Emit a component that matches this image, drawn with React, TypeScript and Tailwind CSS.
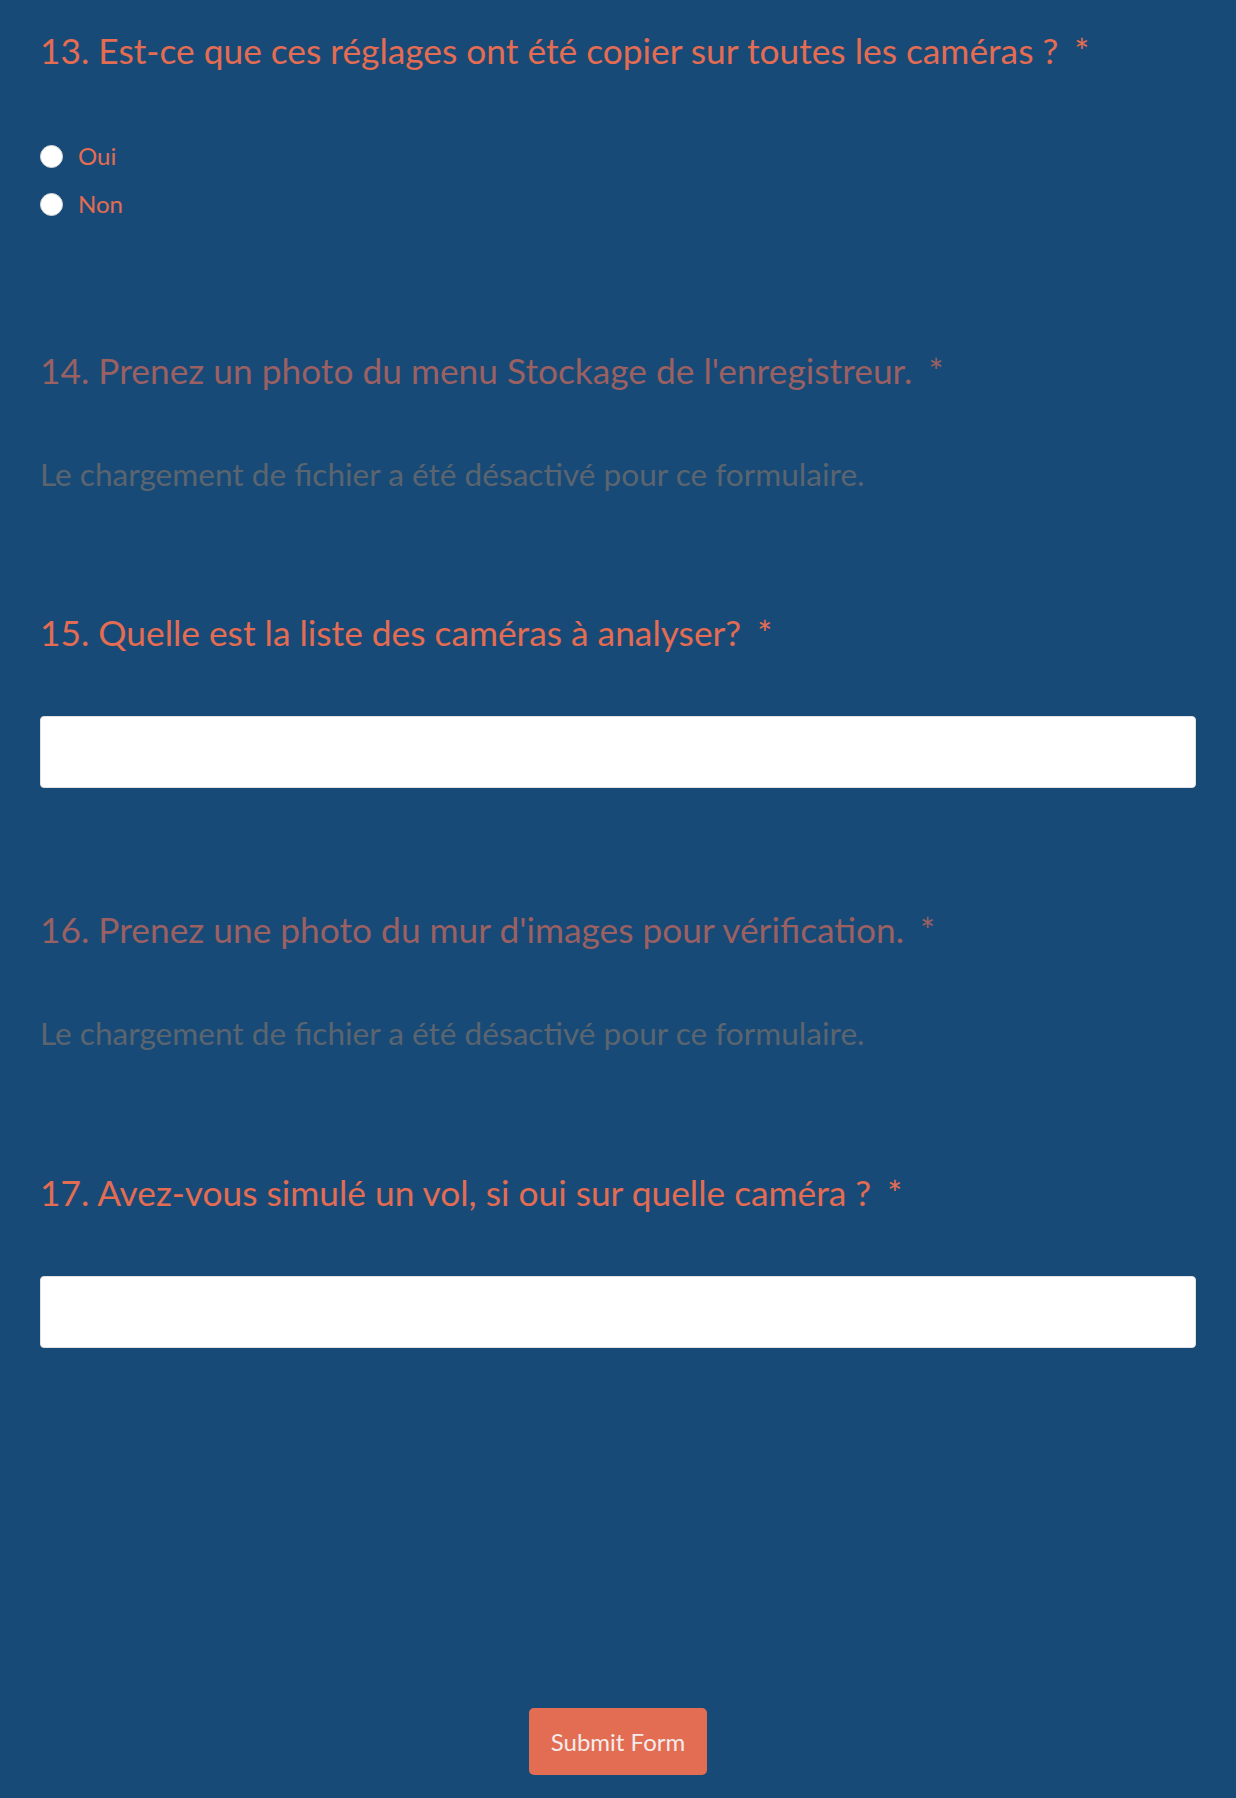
import React from 'react';

const headingCls = 'text-[35.3px] leading-[40px] text-[#e36c52]';
const disabledHeadingCls = 'text-[35.3px] leading-[40px] text-[#9a6062]';

const Question = ({ num, label, disabled }: { num: number; label: string; disabled?: boolean }) => (
    <h3 className={disabled ? disabledHeadingCls : headingCls}>
        {num}. {label}
        <span className="ml-4">*</span>
    </h3>
);

const Radio = ({ label }: { label: string }) => (
    <label className="flex h-[48px] items-center gap-[15px]">
        <span className="h-[23px] w-[23px] rounded-full border border-[#d6d6d6] bg-white" />
        <span className="text-[24px] leading-none text-[#e36c52]">{label}</span>
    </label>
);

const UploadDisabled = () => (
    <p className="mt-[65px] text-[31.6px] leading-[36px] text-[#5b6570]">
        Le chargement de fichier a été désactivé pour ce formulaire.
    </p>
);

const TextField = () => (
    <input
        type="text"
        className="mt-[63px] block h-[72px] w-full rounded border border-[#e2e2e2] bg-white px-4 text-[24px] outline-none"
    />
);

const App: React.FC = () => {
    return (
        <div className="min-h-[1798px] bg-[#184a77] px-10 pt-[31px] pb-[24px]" style={{ fontFamily: 'Lato, "Open Sans", sans-serif' }}>
            <section>
                <Question num={13} label="Est-ce que ces réglages ont été copier sur toutes les caméras ?" />
                <div className="mt-[61px] flex flex-col">
                    <Radio label="Oui" />
                    <Radio label="Non" />
                </div>
            </section>

            <section className="mt-[123px]">
                <Question num={14} label="Prenez un photo du menu Stockage de l'enregistreur." disabled />
                <UploadDisabled />
            </section>

            <section className="mt-[121px]">
                <Question num={15} label="Quelle est la liste des caméras à analyser?" />
                <TextField />
            </section>

            <section className="mt-[122px]">
                <Question num={16} label="Prenez une photo du mur d'images pour vérification." disabled />
                <UploadDisabled />
            </section>

            <section className="mt-[122px]">
                <Question num={17} label="Avez-vous simulé un vol, si oui sur quelle caméra ?" />
                <TextField />
            </section>

            <div className="mt-[360px] flex justify-center">
                <button className="h-[67px] w-[178px] rounded-[5px] bg-[#e36d52] text-[24px] text-[#f3ecec]">
                    Submit Form
                </button>
            </div>
        </div>
    );
};

export default App;
